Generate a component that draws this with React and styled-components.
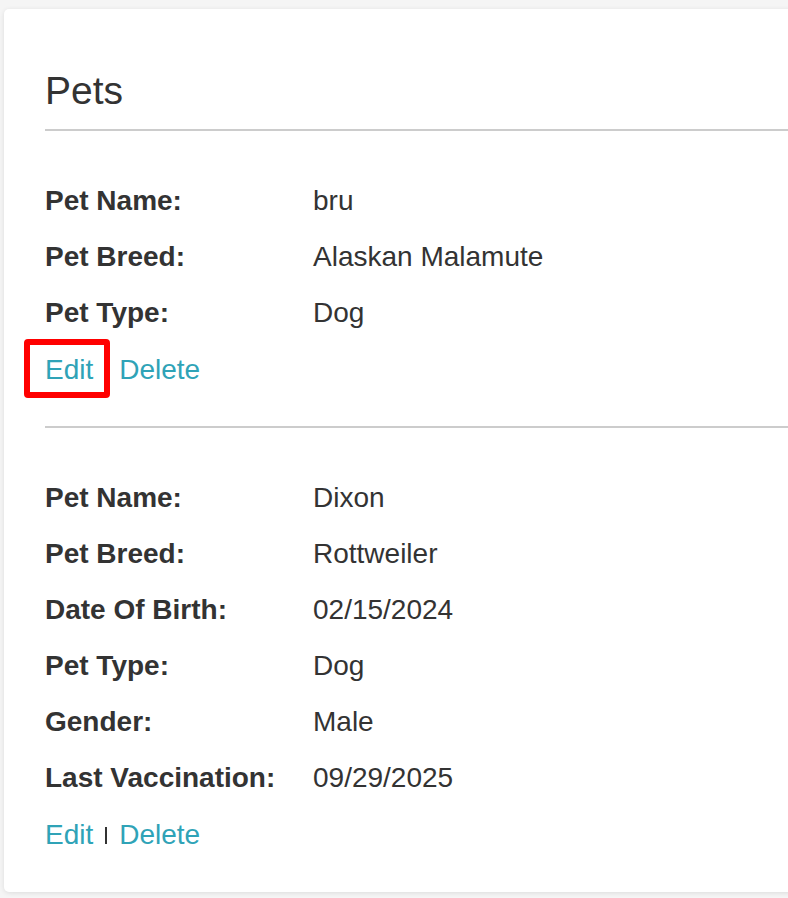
import React from 'react';
import styled, { createGlobalStyle, css } from 'styled-components';

const GlobalStyle = createGlobalStyle`
  html, body {
    margin: 0;
    padding: 0;
    background: #f5f5f5;
    overflow: hidden;
  }
  body {
    font-family: "Liberation Sans", Arial, Helvetica, sans-serif;
    color: #333333;
  }
`;

const Page = styled.div`
  padding: 9px 0 6px 4px;
  overflow: hidden;
`;

const Card = styled.div`
  background: #ffffff;
  border-radius: 5px;
  box-shadow: 0 1px 5px rgba(0, 0, 0, 0.1);
  margin-right: -30px;
  padding: 60px 0 0 41px;
  box-sizing: border-box;
  height: 883px;
`;

const Heading = styled.h3`
  margin: 0;
  font-size: 39px;
  line-height: 43px;
  font-weight: 400;
  color: #333333;
  padding-bottom: 17px;
  border-bottom: 2px solid #cccccc;
`;

const PetBlock = styled.div`
  padding: 42px 0 28px;
  ${props => props.divided && css`
    border-bottom: 2px solid #cccccc;
  `}
`;

const Row = styled.div`
  display: grid;
  grid-template-columns: 268px 1fr;
  font-size: 28px;
  line-height: 56px;
  height: 56px;
`;

const Label = styled.span`
  font-weight: 700;
`;

const Value = styled.span`
  font-weight: 400;
`;

const Actions = styled.div`
  margin-top: 1px;
  font-size: 28px;
  line-height: 56px;
  height: 56px;
  white-space: nowrap;
`;

const ActionLink = styled.a`
  display: inline-block;
  position: relative;
  color: #2fa3b7;
  text-decoration: none;
  cursor: pointer;

  ${props => props.highlighted && css`
    &::after {
      content: '';
      position: absolute;
      left: -21px;
      top: -3px;
      right: -17px;
      bottom: 0;
      border: 6px solid #ff0000;
      border-radius: 4px;
      z-index: 1;
    }
  `}
`;

const Separator = styled.span`
  display: inline-block;
  vertical-align: baseline;
  width: 2px;
  height: 17px;
  margin: 0 12px;
  background: #333333;
`;

const pets = [
  {
    id: 1,
    fields: [
      ['Pet Name:', 'bru'],
      ['Pet Breed:', 'Alaskan Malamute'],
      ['Pet Type:', 'Dog'],
    ],
  },
  {
    id: 2,
    fields: [
      ['Pet Name:', 'Dixon'],
      ['Pet Breed:', 'Rottweiler'],
      ['Date Of Birth:', '02/15/2024'],
      ['Pet Type:', 'Dog'],
      ['Gender:', 'Male'],
      ['Last Vaccination:', '09/29/2025'],
    ],
  },
];

const App = () => {
  return (
    <Page>
      <GlobalStyle />
      <Card>
        <Heading>Pets</Heading>
        {pets.map((pet, i) => (
          <PetBlock key={pet.id} divided={i < pets.length - 1}>
            {pet.fields.map(([label, value]) => (
              <Row key={label}>
                <Label>{label}</Label>
                <Value>{value}</Value>
              </Row>
            ))}
            <Actions>
              <ActionLink highlighted={i === 0}>Edit</ActionLink>
              <Separator />
              <ActionLink>Delete</ActionLink>
            </Actions>
          </PetBlock>
        ))}
      </Card>
    </Page>
  );
};

export default App;
